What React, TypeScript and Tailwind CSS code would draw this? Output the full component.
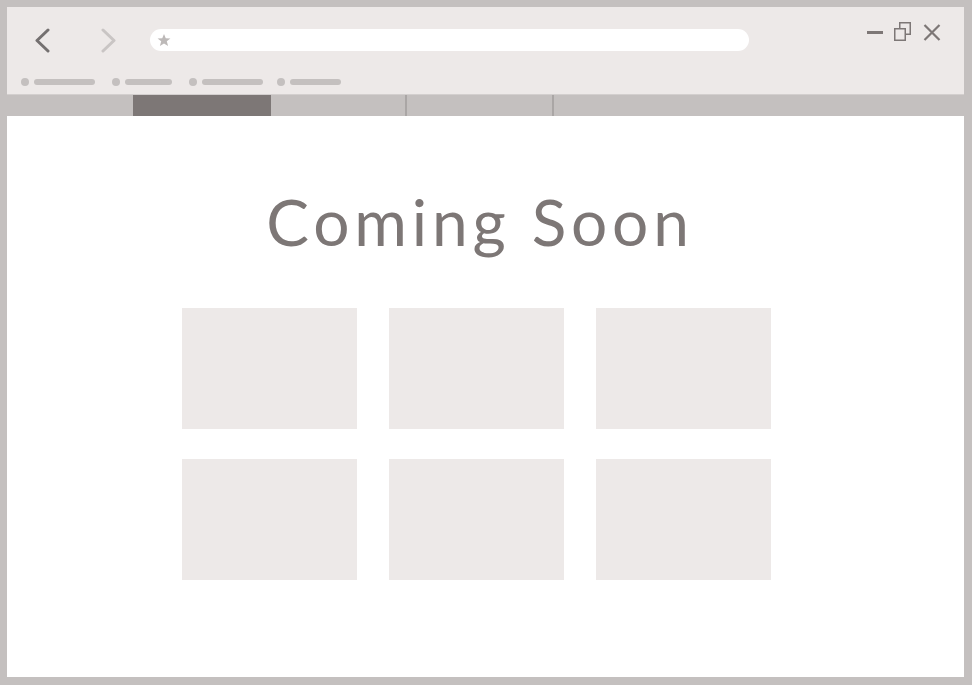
import React from 'react';

const bookmarks = [61, 47, 61, 51];

const App: React.FC = () => {
  return (
    <div className="w-[972px] h-[685px] bg-[#c4c0bf] pl-[7px] pt-[7px] pr-[8px] pb-[8px]">
      <div className="w-full h-full flex flex-col bg-white">
        {/* toolbar */}
        <div className="h-[87px] bg-[#ede9e8] pl-[27px] pt-[21px]">
          <div className="flex items-start">
            <svg width="16" height="25" viewBox="0 0 16 25" className="shrink-0">
              <polyline points="14,2 3,12.5 14,23" fill="none" stroke="#747070" strokeWidth="3" strokeLinecap="round" strokeLinejoin="round" />
            </svg>
            <svg width="16" height="25" viewBox="0 0 16 25" className="ml-[51px] shrink-0">
              <polyline points="2,2 13,12.5 2,23" fill="none" stroke="#c9c5c4" strokeWidth="3" strokeLinecap="round" strokeLinejoin="round" />
            </svg>
            <div className="ml-[33px] mt-[1px] w-[599px] h-[22px] rounded-full bg-white flex items-center pl-[7px]">
              <svg width="14" height="14" viewBox="0 0 24 24">
                <polygon points="12,1.5 15,9 23,9.3 16.8,14.3 19,22.3 12,17.8 5,22.3 7.2,14.3 1,9.3 9,9" fill="#bdb9b8" />
              </svg>
            </div>
            <div className="ml-[118px] -mt-[6px] flex items-start">
              <div className="mt-[9px] w-[16px] h-[3px] bg-[#7d7776]" />
              <svg width="17" height="19" viewBox="0 0 17 19" className="ml-[11px] shrink-0">
                <rect x="5.75" y="0.75" width="10.5" height="11.5" fill="none" stroke="#7d7776" strokeWidth="1.5" />
                <rect x="0.75" y="6.75" width="10.5" height="11.5" fill="#ede9e8" stroke="#7d7776" strokeWidth="1.5" />
              </svg>
              <svg width="18" height="17" viewBox="0 0 18 17" className="ml-[12px] mt-[2px] shrink-0">
                <path d="M1.5 1 L16.5 16 M16.5 1 L1.5 16" stroke="#7d7776" strokeWidth="2.2" />
              </svg>
            </div>
          </div>
          <div className="mt-[25px] flex items-center h-[8px] -ml-[13px]">
            {bookmarks.map((w, i) => (
              <div key={i} className={`flex items-center ${i === 0 ? '' : i === 3 ? 'ml-[14px]' : 'ml-[17px]'}`}>
                <div className="w-[8px] h-[8px] rounded-full bg-[#c4c0bf]" />
                <div className="ml-[5px] h-[6px] rounded-full bg-[#c4c0bf]" style={{ width: w }} />
              </div>
            ))}
          </div>
        </div>

        {/* tab strip */}
        <div className="h-[22px] bg-[#c4c0bf] flex border-t border-[#d3cfce]">
          <div className="w-[126px]" />
          <div className="w-[138px] bg-[#7d7776]" />
          <div className="w-[134px]" />
          <div className="w-[2px] bg-[#aaa6a5]" />
          <div className="w-[145px]" />
          <div className="w-[2px] bg-[#aaa6a5]" />
        </div>

        {/* page */}
        <div className="flex-1 flex flex-col items-center pt-[74px]">
          <h1 className="mr-[11px] text-[64px] leading-none font-normal tracking-[4.8px] text-[#7d7776] font-['Lato','Liberation_Sans',sans-serif]">
            Coming Soon
          </h1>
          <div className="mt-[54px] mr-[18px] grid grid-cols-[175px_175px_175px] auto-rows-[121px] gap-x-[32px] gap-y-[30px]">
            {Array.from({ length: 6 }).map((_, i) => (
              <div key={i} className="bg-[#ede9e8]" />
            ))}
          </div>
        </div>
      </div>
    </div>
  );
};

export default App;
